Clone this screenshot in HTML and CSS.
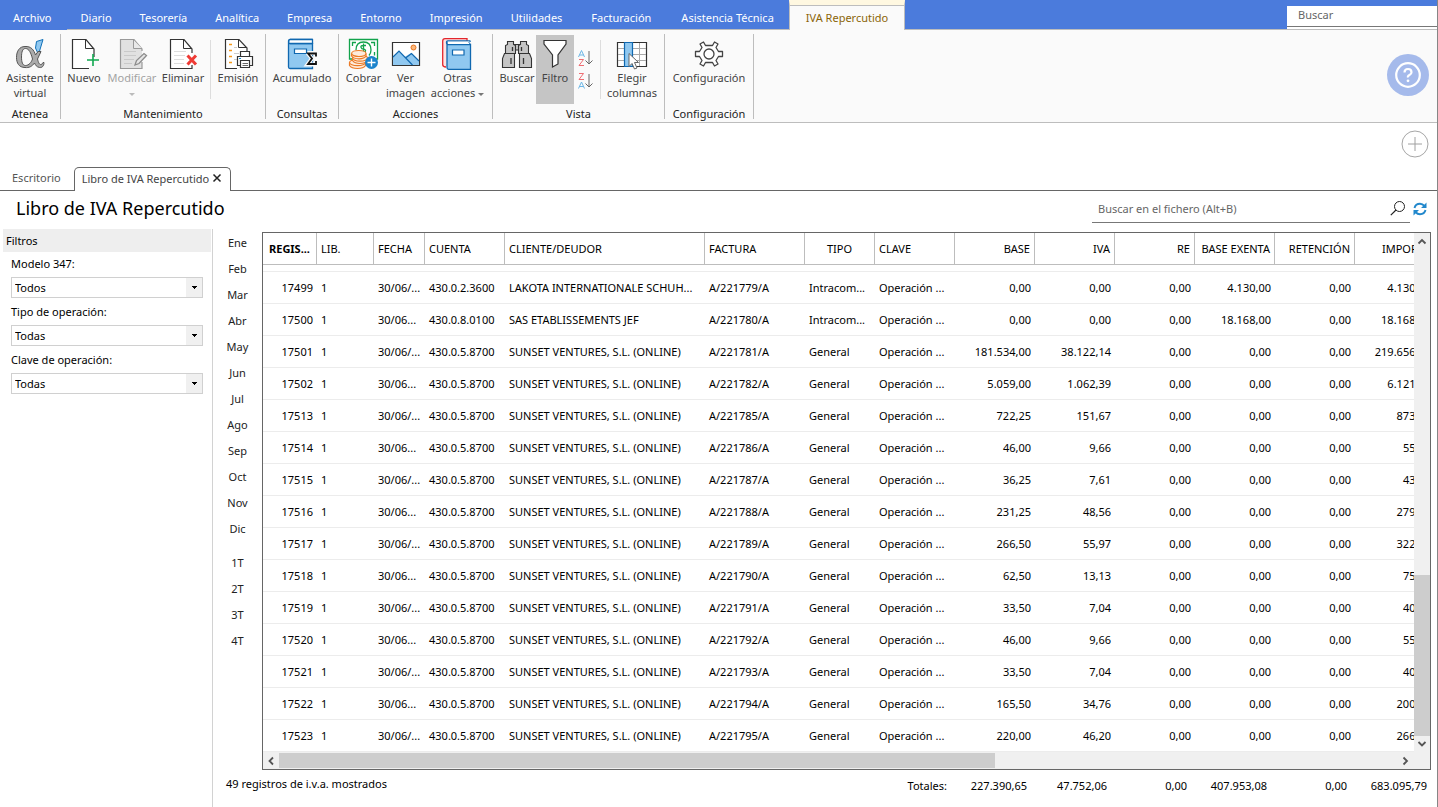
FILE: index.html
```html
<!DOCTYPE html>
<html lang="es">
<head>
<meta charset="utf-8">
<title>Libro de IVA Repercutido</title>
<link rel="stylesheet" href="styles.css">
</head>
<body>
<div class="app">
  <header class="menubar">
    <nav class="menu">
      <button class="menu-tab first">Archivo</button>
      <button class="menu-tab">Diario</button>
      <button class="menu-tab">Tesorería</button>
      <button class="menu-tab">Analítica</button>
      <button class="menu-tab">Empresa</button>
      <button class="menu-tab">Entorno</button>
      <button class="menu-tab">Impresión</button>
      <button class="menu-tab">Utilidades</button>
      <button class="menu-tab wide">Facturación</button>
      <button class="menu-tab wide">Asistencia Técnica</button>
      <button class="menu-tab active">IVA Repercutido</button>
    </nav>
    <div class="menu-search"><input type="text" placeholder="Buscar" aria-label="Buscar"></div>
  </header>

  <section class="ribbon">
    <div class="group g-atenea">
      <div class="tools">
        <button class="tool"><svg class="icon" viewBox="0 0 32 32"><path d="M22.500 3.500L29 1.500L24.500 16.500L21.500 10Z" fill="#90c8f0" stroke="#1070b8"/><path d="M11 8.500C17 8 20 12 21.500 17L24 13.500H27L23.500 21C24.500 25 25.500 27 27.500 26.500L29 24.500H30C30 28 28 30 25.500 29.500C22.500 29 21.500 27 20.500 25C18 28.500 15 30 11 29.500C5 29.500 2.500 25 2.500 19.500C2.500 13 5.500 8.500 11 8.500ZM11.500 10.500C8.500 10.500 7.500 14 7.500 19C7.500 24 8.500 27.500 11.500 27.500C15 27.500 17.500 24 18.500 21C17 15 15 10.500 11.500 10.500Z" fill="#ababab" stroke="#555" fill-rule="evenodd"/></svg><span>Asistente<br>virtual</span></button>
      </div>
      <div class="group-name">Atenea</div>
    </div>
    <div class="group g-mant">
      <div class="tools">
        <button class="tool w42"><svg class="icon" viewBox="0 0 32 32"><path d="M26 19V11L18 1.500H4.500V30.500H21" fill="#fff" stroke="#333" stroke-width="1.200"/><path d="M17.500 2V10.500H26" fill="none" stroke="#333"/><path d="M25 16V28M19 22H31" stroke="#11a850" stroke-width="1.600"/></svg><span>Nuevo</span></button>
        <button class="tool w54 disabled"><svg class="icon" viewBox="0 0 32 32"><path d="M26 13V11L18 1.500H4.500V30.500H26V24" fill="#e1e1e1" stroke="#999" stroke-width="1.200"/><path d="M17.500 2V10.500H26" fill="#e9e9e9" stroke="#999"/><path d="M8 13.500H20M8 17.500H20M8 21.500H18M8 25.500H16" stroke="#c9c9c9"/><path d="M19 27L20.500 22.500L28 15.500L30.500 17.500L23 25.500Z" fill="#e5e5e5" stroke="#8c8c8c" stroke-width="1.300"/></svg><span>Modificar<br><i class="caret"></i></span></button>
        <button class="tool w48"><svg class="icon" viewBox="0 0 32 32"><path d="M25 15V11L17 1.500H3.500V30.500H25V27" fill="#fff" stroke="#333" stroke-width="1.200"/><path d="M16.500 2V10.500H25" fill="none" stroke="#333"/><path d="M7 13.500H19M7 17.500H18M7 21.500H17M7 25.500H17" stroke="#ddd"/><path d="M20.500 17.500L29 26.500M29 17.500L20.500 26.500" stroke="#ef3a34" stroke-width="3"/></svg><span>Eliminar</span></button>
        <div class="tool-sep spaced"></div>
        <button class="tool w50"><svg class="icon" viewBox="0 0 32 32"><path d="M25 13V10L17 1.500H3.500V30.500H15" fill="#fff" stroke="#333" stroke-width="1.200"/><path d="M16.500 2V9.500H25" fill="none" stroke="#333"/><path d="M7 6.500H10M7 12.500H10M7 18.500H10M7 24.500H10" stroke="#f59a1c" stroke-width="1.500"/><path d="M12 9.500H15M12 15.500H17M12 21.500H15" stroke="#ccc"/><path d="M18.500 18V13.500H27.500V18M19 27.500H15.500V18.500H30.500V27.500H27" fill="#fff" stroke="#333" stroke-width="1.200"/><path d="M18.500 22.500H27.500V29.500H18.500Z" fill="#fff" stroke="#333" stroke-width="1.200"/><path d="M20.500 25.500H26M20.500 27.500H26" stroke="#666"/><path d="M17 20.500H19" stroke="#1389cf"/></svg><span>Emisión</span></button>
      </div>
      <div class="group-name">Mantenimiento</div>
    </div>
    <div class="group g-cons">
      <div class="tools">
        <button class="tool"><svg class="icon" viewBox="0 0 32 32"><path d="M2.500 4V29Q2.500 30.500 4 30.500H26.500V5.500H4Q2.500 5.500 2.500 3.500T4 1.500H26.500" fill="#90c8f0" stroke="#1068b0" stroke-width="1.300"/><path d="M4 2H26V5H4Z" fill="#fff"/><path d="M26.500 1V6M4 5.500H26M4 1.500H27" stroke="#1068b0" stroke-width="1.300"/><path d="M8.500 11H20.500V15.500H8.500Z" fill="#fff" stroke="#1068b0" stroke-width="1.200"/><path d="M21.500 15H30V18.500M30 23V26.500H21.500L26 20.500L21.500 15" fill="none" stroke="#fafafa" stroke-width="4"/><path d="M30 18.500V15.500H22L26 20.500L22 26H30V23" fill="none" stroke="#111" stroke-width="1.800"/></svg><span>Acumulado</span></button>
      </div>
      <div class="group-name">Consultas</div>
    </div>
    <div class="group g-acc">
      <div class="tools">
        <button class="tool w42"><svg class="icon" viewBox="0 0 32 32"><path d="M1.500 1.500H29.500V21H1.500Z" fill="#fff" stroke="#12a34c" stroke-width="1.300"/><path d="M4.500 8V4.500H8M23 4.500H26.500V8M26.500 14V17.500" fill="none" stroke="#12a34c" stroke-width="1.300"/><path d="M8 12Q8 4 15.500 4T23 12Q23 15 21 17.500" fill="none" stroke="#12a34c" stroke-width="1.300"/><path d="M18 7.500H15Q12.500 7.500 13 9.300T16 11Q18.500 12 17 14H13M15.500 5.500V16" fill="none" stroke="#12a34c" stroke-width="1.300"/><g fill="#fdebdc" stroke="#ec7a25" stroke-width="1.200"><path d="M1.500 24.500V27.500Q3.500 30.500 9.500 30.500T17.500 27.500V24.500"/><ellipse cx="9.500" cy="24.500" rx="8" ry="3.200"/><path d="M4.500 19.500V22.500Q6.500 25.500 12 25.500T19.500 22.500V19.500"/><ellipse cx="12" cy="20" rx="7.500" ry="3.200"/><path d="M3.500 15.500V18Q5.500 20.800 11 20.800T18 18V15.500"/><ellipse cx="10.800" cy="15.500" rx="7.200" ry="3"/></g><circle cx="23.500" cy="24.500" r="6.500" fill="#1c83cc"/><path d="M23.500 20.500V28.500M19.500 24.500H27.500" stroke="#fff" stroke-width="1.400"/></svg><span>Cobrar</span></button>
        <button class="tool w42"><svg class="icon" viewBox="0 0 32 32"><path d="M2.500 4.500H29.500V27.500H2.500Z" fill="#fff" stroke="#333" stroke-width="1.200"/><path d="M3 19L9 13L14.500 19L21 15L29 22.500V27H3Z" fill="#90c8f0"/><path d="M3 19L9 13L22.500 27M15.500 20L21.500 15.500L29 23" fill="none" stroke="#1068b0" stroke-width="1.200"/><circle cx="23.500" cy="9.500" r="2.500" fill="#fbb77b" stroke="#e8751f"/></svg><span>Ver<br>imagen</span></button>
        <button class="tool w62"><svg class="icon" viewBox="0 0 32 32"><path d="M25 3V0.700H3Q0.700 0.700 0.700 3V26.500Q0.700 29 4 29" fill="#fde3e3" stroke="#e3262c" stroke-width="1.300"/><path d="M5 4V29.500Q5 31.300 6.500 31.300H28.500V6.500H6Q4.500 6.500 4.500 4.500T6 3H28.500" fill="#90c8f0" stroke="#1068b0" stroke-width="1.300"/><path d="M6 3.500H28V6H6Z" fill="#fff"/><path d="M28.500 3L27 4.500L28.500 6.500" fill="none" stroke="#1068b0"/><path d="M10.500 12H22V17H10.500Z" fill="#fff" stroke="#1068b0" stroke-width="1.200"/></svg><span>Otras<br>acciones <i class="caret dark"></i></span></button>
      </div>
      <div class="group-name">Acciones</div>
    </div>
    <div class="group g-vista">
      <div class="tools">
        <button class="tool w38"><svg class="icon" viewBox="0 0 32 32"><g fill="#c5c5c5" stroke="#333" stroke-width="1.100"><path d="M13.500 6.500H18.500V12H13.500Z"/><path d="M6.500 6.500V3.500H12.500V6.500L14.500 7.500V15.500H4.500V7.500ZM19.500 6.500V3.500H25.500V6.500L27.500 7.500V15.500H17.500V7.500Z"/><path d="M3.500 15.500H13.500V29.500H1.500V20.500ZM18.500 15.500H28.500L30.500 20.500V29.500H18.500Z"/></g><path d="M11.500 9V13M20.500 9V13M10 20V26M22.500 20V26" stroke="#333" stroke-width="1.300"/></svg><span>Buscar</span></button>
        <button class="tool w38 pressed" aria-pressed="true"><svg class="icon" viewBox="0 0 32 32"><path d="M5 2.500H27V6L19 17V26L13.500 29V17L5 6Z" fill="#fff" stroke="#333" stroke-width="1.200"/></svg><span>Filtro</span></button>
        <div class="sorts">
          <button class="sort" aria-label="Orden ascendente"><svg viewBox="0 0 16 17"><path d="M0.500 7L3.500 0.500L6.500 7M1.500 5H5.500" fill="none" stroke="#6cb6e6"/><path d="M1 9.500H5.500L1 15.500H6" fill="none" stroke="#ef6d73"/><path d="M11 1V14M7.500 10.500L11 14L14.500 10.500" fill="none" stroke="#666"/></svg></button>
          <button class="sort" aria-label="Orden descendente"><svg viewBox="0 0 16 17"><path d="M1 0.500H5.500L1 6.500H6" fill="none" stroke="#ef6d73"/><path d="M0.500 15.500L3.500 9L6.500 15.500M1.500 13.500H5.500" fill="none" stroke="#6cb6e6"/><path d="M11 1V14M7.500 10.500L11 14L14.500 10.500" fill="none" stroke="#666"/></svg></button>
        </div>
        <div class="tool-sep"></div>
        <button class="tool w62"><svg class="icon" viewBox="0 0 32 32"><path d="M1.500 4.500H30.500V28.500H1.500Z" fill="#fff" stroke="#333" stroke-width="1.200"/><path d="M2 10.500H30M2 16.500H30M2 22.500H30M23.500 5V28" stroke="#aaa"/><path d="M8.500 4.500H16.500V28.500H8.500Z" fill="#90c8f0" stroke="#1068b0" stroke-width="1.200"/><path d="M13 15.500V28.500L16 25.500L18.500 31L21 30L18.500 24.500H22.500Z" fill="#fff" stroke="#666"/></svg><span>Elegir<br>columnas</span></button>
      </div>
      <div class="group-name">Vista</div>
    </div>
    <div class="group g-conf">
      <div class="tools">
        <button class="tool"><svg class="icon" viewBox="0 0 32 32"><path d="M2.500 13.500H6.500L9 9.500L7 6L10.500 4L12.500 7.500H19.500L21.500 4L25 6L23 9.500L25.500 13.500H29.500V18.500H25.500L23 22.500L25 26L21.500 28L19.500 24.500H12.500L10.500 28L7 26L9 22.500L6.500 18.500H2.500Z" fill="#fff" stroke="#444" stroke-width="1.300" stroke-linejoin="round"/><circle cx="16" cy="16" r="5" fill="#fff" stroke="#444" stroke-width="1.300"/></svg><span>Configuración</span></button>
      </div>
      <div class="group-name">Configuración</div>
    </div>
    <button class="help" aria-label="Ayuda"><svg viewBox="0 0 42 42"><circle cx="21" cy="21" r="21" fill="#a5baeb"/><circle cx="21" cy="21" r="11.800" fill="none" stroke="#fff" stroke-width="2.200"/><path d="M17.500 18.500Q17.500 15 21 15T24.500 18.300Q24.500 20 22.500 21T21 23.500" fill="none" stroke="#fff" stroke-width="2.200"/><circle cx="21" cy="26.800" r="1.400" fill="#fff"/></svg></button>
  </section>

  <div class="addbar"><button class="add" aria-label="Añadir"><svg viewBox="0 0 28 28"><circle cx="14" cy="14" r="13" fill="none" stroke="#a6a6a6"/><path d="M14 7V21M7 14H21" stroke="#a0a0a0"/></svg></button></div>

  <div class="doctabs">
    <button class="doctab">Escritorio</button>
    <button class="doctab open">Libro de IVA Repercutido <svg viewBox="0 0 10 10"><path d="M1.500 1.500L8.500 8.500M8.500 1.500L1.500 8.500" stroke="#222" stroke-width="1.500"/></svg></button>
    <div class="doctab-line"></div>
  </div>

  <div class="titlebar">
    <h1>Libro de IVA Repercutido</h1>
    <label class="file-search"><input type="text" placeholder="Buscar en el fichero (Alt+B)" aria-label="Buscar en el fichero"><svg viewBox="0 0 16 16"><circle cx="9.500" cy="6.500" r="5" fill="none" stroke="#222"/><path d="M6 10L0.800 15.200" stroke="#222" stroke-width="1.200"/></svg></label>
    <button class="refresh" aria-label="Actualizar"><svg viewBox="0 0 14 14"><path d="M1.500 6Q2.500 1.800 7 1.800Q9.500 1.800 11.500 4M12.500 8Q11.500 12.200 7 12.200Q4.500 12.200 2.500 10" fill="none" stroke="#2288cc" stroke-width="1.900"/><path d="M13.500 0.500V6H8ZM0.500 13.500V8H6Z" fill="#2288cc"/></svg></button>
  </div>

  <main class="body">
    <aside class="filters">
      <h2>Filtros</h2>
      <div class="field"><label for="f1">Modelo 347:</label><select id="f1"><option>Todos</option></select></div>
      <div class="field"><label for="f2">Tipo de operación:</label><select id="f2"><option>Todas</option></select></div>
      <div class="field"><label for="f3">Clave de operación:</label><select id="f3"><option>Todas</option></select></div>
    </aside>
    <nav class="periods">
      <button>Ene</button><button>Feb</button><button>Mar</button><button>Abr</button><button>May</button><button>Jun</button><button>Jul</button><button>Ago</button><button>Sep</button><button>Oct</button><button>Nov</button><button>Dic</button>
      <button class="quarter">1T</button><button>2T</button><button>3T</button><button>4T</button>
    </nav>
    <section class="content">
      <div class="grid">
        <div class="viewport">
          <table>
            <colgroup><col class="c54"><col class="c57"><col class="c51"><col class="c80"><col class="c200"><col class="c100"><col class="c70"><col class="c80"><col class="c80"><col class="c80"><col class="c80"><col class="c80"><col class="c80"><col class="c80"></colgroup>
            <thead><tr><th class="sorted">REGIS...</th><th>LIB.</th><th>FECHA</th><th>CUENTA</th><th>CLIENTE/DEUDOR</th><th>FACTURA</th><th class="mid">TIPO</th><th>CLAVE</th><th class="num">BASE</th><th class="num">IVA</th><th class="num">RE</th><th class="num">BASE EXENTA</th><th class="num">RETENCIÓN</th><th class="num">IMPORTE</th></tr></thead>
            <tbody>
              <tr class="partial"><td colspan="14"></td></tr>
              <tr><td>17499</td><td>1</td><td>30/06/...</td><td>430.0.2.3600</td><td>LAKOTA INTERNATIONALE SCHUH...</td><td>A/221779/A</td><td>Intracom...</td><td>Operación ...</td><td>0,00</td><td>0,00</td><td>0,00</td><td>4.130,00</td><td>0,00</td><td>4.130,00</td></tr>
              <tr><td>17500</td><td>1</td><td>30/06...</td><td>430.0.8.0100</td><td>SAS ETABLISSEMENTS JEF</td><td>A/221780/A</td><td>Intracom...</td><td>Operación ...</td><td>0,00</td><td>0,00</td><td>0,00</td><td>18.168,00</td><td>0,00</td><td>18.168,00</td></tr>
              <tr><td>17501</td><td>1</td><td>30/06/...</td><td>430.0.5.8700</td><td>SUNSET VENTURES, S.L. (ONLINE)</td><td>A/221781/A</td><td>General</td><td>Operación ...</td><td>181.534,00</td><td>38.122,14</td><td>0,00</td><td>0,00</td><td>0,00</td><td>219.656,14</td></tr>
              <tr><td>17502</td><td>1</td><td>30/06...</td><td>430.0.5.8700</td><td>SUNSET VENTURES, S.L. (ONLINE)</td><td>A/221782/A</td><td>General</td><td>Operación ...</td><td>5.059,00</td><td>1.062,39</td><td>0,00</td><td>0,00</td><td>0,00</td><td>6.121,39</td></tr>
              <tr><td>17513</td><td>1</td><td>30/06/...</td><td>430.0.5.8700</td><td>SUNSET VENTURES, S.L. (ONLINE)</td><td>A/221785/A</td><td>General</td><td>Operación ...</td><td>722,25</td><td>151,67</td><td>0,00</td><td>0,00</td><td>0,00</td><td>873,92</td></tr>
              <tr><td>17514</td><td>1</td><td>30/06...</td><td>430.0.5.8700</td><td>SUNSET VENTURES, S.L. (ONLINE)</td><td>A/221786/A</td><td>General</td><td>Operación ...</td><td>46,00</td><td>9,66</td><td>0,00</td><td>0,00</td><td>0,00</td><td>55,66</td></tr>
              <tr><td>17515</td><td>1</td><td>30/06/...</td><td>430.0.5.8700</td><td>SUNSET VENTURES, S.L. (ONLINE)</td><td>A/221787/A</td><td>General</td><td>Operación ...</td><td>36,25</td><td>7,61</td><td>0,00</td><td>0,00</td><td>0,00</td><td>43,86</td></tr>
              <tr><td>17516</td><td>1</td><td>30/06...</td><td>430.0.5.8700</td><td>SUNSET VENTURES, S.L. (ONLINE)</td><td>A/221788/A</td><td>General</td><td>Operación ...</td><td>231,25</td><td>48,56</td><td>0,00</td><td>0,00</td><td>0,00</td><td>279,81</td></tr>
              <tr><td>17517</td><td>1</td><td>30/06/...</td><td>430.0.5.8700</td><td>SUNSET VENTURES, S.L. (ONLINE)</td><td>A/221789/A</td><td>General</td><td>Operación ...</td><td>266,50</td><td>55,97</td><td>0,00</td><td>0,00</td><td>0,00</td><td>322,47</td></tr>
              <tr><td>17518</td><td>1</td><td>30/06...</td><td>430.0.5.8700</td><td>SUNSET VENTURES, S.L. (ONLINE)</td><td>A/221790/A</td><td>General</td><td>Operación ...</td><td>62,50</td><td>13,13</td><td>0,00</td><td>0,00</td><td>0,00</td><td>75,63</td></tr>
              <tr><td>17519</td><td>1</td><td>30/06/...</td><td>430.0.5.8700</td><td>SUNSET VENTURES, S.L. (ONLINE)</td><td>A/221791/A</td><td>General</td><td>Operación ...</td><td>33,50</td><td>7,04</td><td>0,00</td><td>0,00</td><td>0,00</td><td>40,54</td></tr>
              <tr><td>17520</td><td>1</td><td>30/06...</td><td>430.0.5.8700</td><td>SUNSET VENTURES, S.L. (ONLINE)</td><td>A/221792/A</td><td>General</td><td>Operación ...</td><td>46,00</td><td>9,66</td><td>0,00</td><td>0,00</td><td>0,00</td><td>55,66</td></tr>
              <tr><td>17521</td><td>1</td><td>30/06/...</td><td>430.0.5.8700</td><td>SUNSET VENTURES, S.L. (ONLINE)</td><td>A/221793/A</td><td>General</td><td>Operación ...</td><td>33,50</td><td>7,04</td><td>0,00</td><td>0,00</td><td>0,00</td><td>40,54</td></tr>
              <tr><td>17522</td><td>1</td><td>30/06...</td><td>430.0.5.8700</td><td>SUNSET VENTURES, S.L. (ONLINE)</td><td>A/221794/A</td><td>General</td><td>Operación ...</td><td>165,50</td><td>34,76</td><td>0,00</td><td>0,00</td><td>0,00</td><td>200,26</td></tr>
              <tr><td>17523</td><td>1</td><td>30/06/...</td><td>430.0.5.8700</td><td>SUNSET VENTURES, S.L. (ONLINE)</td><td>A/221795/A</td><td>General</td><td>Operación ...</td><td>220,00</td><td>46,20</td><td>0,00</td><td>0,00</td><td>0,00</td><td>266,20</td></tr>
            </tbody>
          </table>
        </div>
        <div class="vscroll">
          <svg viewBox="0 0 16 16"><path d="M4.500 10.500L8 7L11.500 10.500" fill="none" stroke="#555" stroke-width="1.800"/></svg>
          <div class="vtrack"><div class="vthumb"></div></div>
          <svg viewBox="0 0 16 16"><path d="M4.500 6L8 9.500L11.500 6" fill="none" stroke="#555" stroke-width="1.800"/></svg>
        </div>
        <div class="hscroll">
          <svg viewBox="0 0 16 16"><path d="M10 4.500L6.500 8L10 11.500" fill="none" stroke="#555" stroke-width="1.800"/></svg>
          <div class="htrack"><div class="hthumb"></div></div>
          <svg viewBox="0 0 16 16"><path d="M5.500 4.500L9 8L5.500 11.500" fill="none" stroke="#555" stroke-width="1.800"/></svg>
        </div>
        <div class="corner"></div>
      </div>
      <footer class="status">
        <span class="count">49 registros de i.v.a. mostrados</span>
        <div class="totals"><span>Totales:</span><span>227.390,65</span><span>47.752,06</span><span>0,00</span><span>407.953,08</span><span>0,00</span><span>683.095,79</span></div>
      </footer>
    </section>
  </main>
</div>
</body>
</html>
```

FILE: styles.css
```css
* { box-sizing: border-box; }
body {
  margin: 0;
  font: 11px/15px "Noto Sans", "Open Sans", sans-serif;
  color: #000;
  background: #fff;
}
button, input, select { font: inherit; color: inherit; }
button { margin: 0; padding: 0; border: 0; background: none; white-space: nowrap; }
input { border: 0; outline: 0; background: none; padding: 0; min-width: 0; }
input::placeholder { color: #666; opacity: 1; }
svg { display: block; flex: none; }

.app {
  display: flex;
  flex-direction: column;
  min-height: 100vh;
  border-right: 1px solid #868686;
}

/* Menu bar */
.menubar { display: flex; justify-content: space-between; height: 30px; background: #4b7bdc; }
.menu { display: flex; flex: 1; }
.menu::after { content: ""; flex: 1; border-bottom: 1px solid #bdbdbd; }
.menu-tab { padding: 6px 14px 0; color: #fff; border-bottom: 1px solid #bdbdbd; }
.menu-tab.first { border-bottom-color: #4b7bdc; padding-left: 13px; padding-right: 15px; }
.menu-tab.wide { padding-left: 15px; padding-right: 15px; }
.menu-tab.active {
  padding: 0 16px;
  color: #8a6508;
  background: #fafafa;
  border: 1px solid #bdbdbd;
  border-top: 5px solid #fff8e1;
  border-bottom: 0;
  box-shadow: inset 0 1px #bdbdbd;
}
.menu-search {
  display: flex;
  width: 150px;
  margin-top: 6px;
  padding-bottom: 2px;
  background: #fff;
  border-bottom: 1px solid #bdbdbd;
}
.menu-search input { width: 100%; padding: 0 11px 3px; border-bottom: 1px solid #777; }

/* Ribbon */
.ribbon {
  display: flex;
  align-items: flex-start;
  padding-top: 4px;
  height: 93px;
  background: #fafafa;
  border-bottom: 1px solid #bdbdbd;
}
.group { display: flex; flex-direction: column; height: 85px; border-right: 1px solid #bdbdbd; }
.g-atenea { width: 61px; }
.g-mant { width: 205px; }
.g-cons { width: 73px; }
.g-acc { width: 154px; }
.g-vista { width: 172px; }
.g-conf { width: 89px; }
.tools { display: flex; justify-content: center; flex: 1; }
.g-vista .tools { justify-content: flex-start; padding-left: 5px; }
.tool {
  display: flex;
  flex-direction: column;
  align-items: center;
  height: 69px;
  margin-top: 1px;
  padding-top: 3px;
  color: #444;
}
.icon { width: 32px; height: 32px; }
.w38 { width: 38px; }
.w42 { width: 42px; }
.w48 { width: 48px; }
.w50 { width: 50px; }
.w54 { width: 54px; }
.w62 { width: 62px; }
.disabled { color: #a3a3a3; }
.pressed { background: #c5c5c5; }
.tool-sep { width: 1px; height: 59px; margin-top: 6px; background: #ddd; }
.tool-sep.spaced { margin-left: 3px; margin-right: 2px; }
.caret {
  display: inline-block;
  border: 3px solid transparent;
  border-top-color: #bbb;
  border-bottom: 0;
  vertical-align: middle;
}
.caret.dark { border-top-color: #777; }
.sorts { display: flex; flex-direction: column; gap: 6px; padding: 16px 6px 0 4px; }
.sort svg { width: 16px; height: 17px; }
.group-name { text-align: center; color: #222; height: 12px; line-height: 13px; }
.help { margin: 20px 8px 0 auto; }
.help svg { width: 42px; height: 42px; }

.addbar { display: flex; justify-content: flex-end; height: 44px; padding: 7px 8px 0 0; }
.add { align-self: flex-start; }
.add svg { width: 28px; height: 28px; }

/* Document tabs */
.doctabs { display: flex; height: 24px; color: #555; }
.doctab { padding: 0 13px 2px 12px; border-bottom: 1px solid #666; }
.doctab.open {
  display: flex;
  align-items: center;
  gap: 3px;
  padding: 0 8px 3px 7px;
  color: #444;
  border: 1px solid #666;
  border-bottom: 0;
  border-radius: 5px 5px 0 0;
}
.doctab svg { width: 10px; height: 10px; }
.doctab-line { flex: 1; border-bottom: 1px solid #666; }

/* Title and file search */
.titlebar { display: flex; align-items: flex-start; height: 38px; padding: 0 10px 0 16px; }
h1 { flex: 1; margin: 4px 0 0; font-size: 18px; line-height: 26px; font-weight: 400; }
.file-search { display: flex; align-items: center; width: 318px; height: 32px; padding: 3px 4px 0 6px; border-bottom: 1px solid #777; }
.file-search input { flex: 1; }
.file-search svg { width: 16px; height: 16px; }
.refresh { margin: 11px 0 0 3px; }
.refresh svg { width: 14px; height: 14px; }

/* Body */
.body { display: flex; flex: 1; }
.filters { width: 213px; padding: 0 1px 0 3px; border-right: 1px solid #d2d2d2; }
h2 { margin: 0 0 4px; padding: 4px 3px; font-size: 11px; line-height: 15px; font-weight: 400; background: #eee; }
.field { display: flex; flex-direction: column; gap: 6px; margin: 0 8px 6px; }
select {
  appearance: none;
  height: 21px;
  padding: 0 3px;
  border: 1px solid #d0d0d0;
  border-radius: 0;
  background:
    linear-gradient(#000, #000) right 5px top 8px / 5px 1px no-repeat,
    linear-gradient(#000, #000) right 6px top 9px / 3px 1px no-repeat,
    linear-gradient(#000, #000) right 7px top 10px / 1px 1px no-repeat,
    linear-gradient(#f0f0f0, #f0f0f0) right / 16px 100% no-repeat,
    #fff;
}
.periods { display: flex; flex-direction: column; align-items: center; width: 49px; }
.periods button { height: 26px; color: #222; }
.periods .quarter { margin-top: 8px; }
.content { display: flex; flex-direction: column; flex: 1; min-width: 0; padding: 3px 6px 0 0; }

/* Data grid */
.grid { display: grid; grid-template-columns: minmax(0, 1fr) 16px; grid-template-rows: auto 17px; border: 1px solid #666; background: #f0f0f0; }
.viewport { overflow: hidden; background: #fff; }
table { width: 1172px; table-layout: fixed; border-collapse: separate; border-spacing: 0; }
.c51 { width: 51px; }
.c54 { width: 54px; }
.c57 { width: 57px; }
.c70 { width: 70px; }
.c80 { width: 80px; }
.c100 { width: 100px; }
.c200 { width: 200px; }
th, td { padding: 0 4px; white-space: nowrap; text-align: left; font-weight: 400; }
th { height: 32px; border-right: 1px solid #bdbdbd; border-bottom: 1px solid #bdbdbd; }
th.sorted { font-weight: 700; padding-left: 6px; }
th.mid { text-align: center; }
th.num { text-align: right; }
td { height: 32px; border-bottom: 1px solid #ececec; }
td:first-child, td:nth-child(n+9) { text-align: right; }
.partial td { height: 7px; }
.vscroll { display: flex; flex-direction: column; }
.vscroll svg, .hscroll svg { width: 16px; height: 16px; }
.vtrack { display: flex; flex-direction: column; justify-content: flex-end; flex: 1; }
.vthumb { height: 33%; background: #cdcdcd; }
.hscroll { display: flex; align-items: center; }
.htrack { display: flex; flex: 1; height: 15px; }
.hthumb { width: 64%; background: #cdcdcd; }

/* Status line */
.status { display: flex; justify-content: space-between; margin-left: -36px; padding: 6px 4px 0 0; }
.totals { display: grid; grid-template-columns: auto repeat(6, 80px); padding-top: 2px; text-align: right; }
```
